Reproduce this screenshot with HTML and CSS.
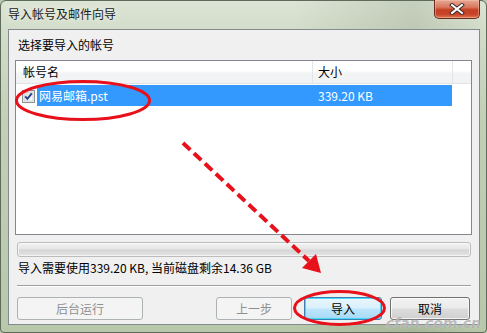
FILE: index.html
```html
<!DOCTYPE html>
<html lang="zh-CN">
<head>
<meta charset="utf-8">
<title>导入帐号及邮件向导</title>
<link rel="stylesheet" href="styles.css">
</head>
<body>
<div class="window">
  <div class="titlebar">
    <span class="title">导入帐号及邮件向导</span>
    <div class="close">
      <svg width="16" height="12" viewBox="0 0 16 12">
        <path d="M3 2 L13 10 M13 2 L3 10" stroke="#3b2a26" stroke-width="4" stroke-linecap="square" fill="none"/>
        <path d="M3 2 L13 10 M13 2 L3 10" stroke="#ffffff" stroke-width="2" stroke-linecap="square" fill="none"/>
      </svg>
    </div>
  </div>
  <div class="client">
    <div class="label">选择要导入的帐号</div>
    <div class="listbox">
      <div class="header">
        <div class="hcol hname">帐号名</div>
        <div class="hcol hsize">大小</div>
        <div class="hcol hfill"></div>
      </div>
      <div class="row">
        <span class="check">
          <svg width="13" height="13" viewBox="0 0 13 13">
            <defs>
              <linearGradient id="cb" x1="0" y1="0" x2="1" y2="1">
                <stop offset="0" stop-color="#d9dadb"/>
                <stop offset="1" stop-color="#ffffff"/>
              </linearGradient>
            </defs>
            <rect x="0.5" y="0.5" width="12" height="12" fill="#f4f4f4" stroke="#8e8f8f"/>
            <rect x="2" y="2" width="9" height="9" fill="url(#cb)" stroke="#b9bcbf" stroke-width="0.6"/>
            <path d="M3.2 6.4 L5.4 8.8 L9.8 3.4" stroke="#21408c" stroke-width="1.9" fill="none"/>
          </svg>
        </span>
        <div class="sel">
          <span class="cname">网易邮箱.pst</span>
          <span class="csize">339.20 KB</span>
        </div>
      </div>
    </div>
    <div class="progress"></div>
    <div class="info">导入需要使用339.20 KB, 当前磁盘剩余14.36 GB</div>
    <div class="sep"></div>
    <div class="buttons">
      <button class="btn disabled wide">后台运行</button>
      <div class="spacer"></div>
      <button class="btn disabled">上一步</button>
      <button class="btn default">导入</button>
      <button class="btn cancel">取消</button>
    </div>
  </div>
  <svg class="annot" width="487" height="333" viewBox="0 0 487 333">
    <ellipse cx="83" cy="100.5" rx="66.5" ry="19" fill="none" stroke="#e8101a" stroke-width="3"/>
    <ellipse cx="339.5" cy="308" rx="45" ry="16.5" fill="none" stroke="#e8101a" stroke-width="3"/>
    <line x1="183" y1="143" x2="309" y2="261" stroke="#e8101a" stroke-width="4" stroke-dasharray="10 5"/>
    <polygon points="321,273 302,268 316,254" fill="#e8101a"/>
  </svg>
  <div class="watermark">cfan.com.cn</div>
</div>
</body>
</html>
```
FILE: styles.css
```css
* { box-sizing: border-box; }

html, body {
  margin: 0;
  padding: 0;
  width: 487px;
  height: 333px;
  overflow: hidden;
  background: #b9c8ad;
}

.window {
  position: relative;
  width: 487px;
  height: 333px;
  display: flex;
  flex-direction: column;
  padding: 0 6px 7px 7px;
  border: 1px solid #5e6b5a;
  border-radius: 6px 6px 4px 4px;
  background:
    linear-gradient(90deg, rgba(255,255,255,0) 0, rgba(255,255,255,0) 60%, rgba(90,110,80,0.18) 85%, rgba(255,255,255,0) 100%),
    linear-gradient(180deg, #dde5d6 0, #d3ddca 28px, #c2d0b6 120px, #b8c8aa 333px);
  font-family: "Noto Sans CJK SC", "Noto Sans", sans-serif;
  font-size: 12px;
  color: #000;
}

.titlebar {
  height: 28px;
  display: flex;
  align-items: flex-start;
  justify-content: space-between;
  flex-shrink: 0;
}

.title {
  margin-top: 5px;
  line-height: 16px;
  font-size: 12px;
  color: #1a1a1a;
  text-shadow: 0 0 6px rgba(255,255,255,0.9);
}

.close {
  width: 46px;
  height: 19px;
  margin-top: -1px;
  margin-right: 0;
  display: flex;
  align-items: center;
  justify-content: center;
  border: 1px solid #6a2a1e;
  border-top: none;
  border-radius: 0 0 5px 5px;
  background: linear-gradient(180deg, #e7a995 0, #d8775d 40%, #c43f22 55%, #c9442a 80%, #db7a52 100%);
  box-shadow: inset 0 0 0 1px rgba(255,200,180,0.45);
}

.client {
  flex: 1;
  display: flex;
  flex-direction: column;
  padding: 7px 7px 0 6px;
  background: #f0f0f0;
  border: 1px solid #838a90;
}

.label {
  line-height: 16px;
  padding-left: 3px;
  height: 16px;
}

.listbox {
  margin-top: 7px;
  height: 175px;
  border: 1px solid #828790;
  background: #fff;
  display: flex;
  flex-direction: column;
}

.header {
  display: flex;
  height: 23px;
  border-bottom: 1px solid #e2e3e4;
  background: linear-gradient(180deg, #ffffff 0, #ffffff 45%, #f3f4f5 55%, #f1f2f3 100%);
}

.hcol {
  line-height: 22px;
  height: 22px;
}

.hname {
  width: 297px;
  padding-left: 7px;
  border-right: 1px solid #e3e5e7;
}

.hsize {
  width: 140px;
  padding-left: 5px;
  border-right: 1px solid #e3e5e7;
}

.hfill { flex: 1; }

.row {
  margin-top: 1px;
  height: 21px;
  display: flex;
  align-items: center;
}

.check {
  width: 13px;
  height: 13px;
  margin-left: 6px;
  margin-top: 2px;
  display: block;
}

.check svg { display: block; }

.sel {
  margin-left: 2px;
  width: 415px;
  height: 21px;
  background: #3399ff;
  color: #fff;
  display: flex;
  align-items: center;
  line-height: 16px;
}

.cname {
  width: 276px;
  padding-left: 2px;
}

.csize {
  padding-left: 5px;
}

.progress {
  margin: 7px 1px 0 2px;
  height: 15px;
  border: 1px solid #bcbcbc;
  border-radius: 3px;
  background: linear-gradient(180deg, #f3f3f3 0, #e6e6e6 45%, #d6d6d6 55%, #e4e4e4 100%);
  box-shadow: inset 0 0 0 1px rgba(255,255,255,0.6);
}

.info {
  margin-top: 3px;
  padding-left: 3px;
  line-height: 16px;
  height: 16px;
}

.sep {
  margin: 9px 1px 0 2px;
  height: 2px;
  border-top: 1px solid #a0a0a0;
  border-bottom: 1px solid #ffffff;
}

.buttons {
  display: flex;
  margin-top: 10px;
  padding-left: 2px;
  height: 23px;
}

.spacer { flex: 1; }

.btn {
  font-family: "Noto Sans CJK SC", "Noto Sans", sans-serif;
  font-size: 12px;
  line-height: 16px;
  width: 76px;
  height: 23px;
  padding: 0;
  border: 1px solid #707070;
  border-radius: 3px;
  color: #000;
  background: linear-gradient(180deg, #f2f2f2 0, #ebebeb 48%, #dddddd 52%, #cfcfcf 100%);
  box-shadow: inset 0 0 0 1px rgba(255,255,255,0.75);
}

.btn.wide { width: 126px; }

.btn.disabled {
  color: #8f8f8f;
  border-color: #adb2b5;
  background: #f4f4f4;
  box-shadow: none;
}

.btn.default {
  margin-left: 12px;
  width: 78px;
  border-color: #3c7fb1;
  background: linear-gradient(180deg, #eaf6fd 0, #d9f0fc 48%, #bee6fd 52%, #a7d9f5 100%);
  box-shadow: inset 0 0 0 1px #48d8fb;
}

.btn.cancel {
  margin-left: 8px;
  width: 80px;
  margin-right: 2px;
}

.annot {
  position: absolute;
  left: -1px;
  top: -1px;
  pointer-events: none;
}

.watermark {
  position: absolute;
  right: 5px;
  bottom: 1px;
  font-family: "DejaVu Sans", sans-serif;
  font-style: italic;
  font-weight: bold;
  font-size: 14px;
  line-height: 16px;
  color: rgba(110,110,110,0.45);
  text-shadow: 0 0 1px rgba(255,255,255,0.8);
  pointer-events: none;
}
```
